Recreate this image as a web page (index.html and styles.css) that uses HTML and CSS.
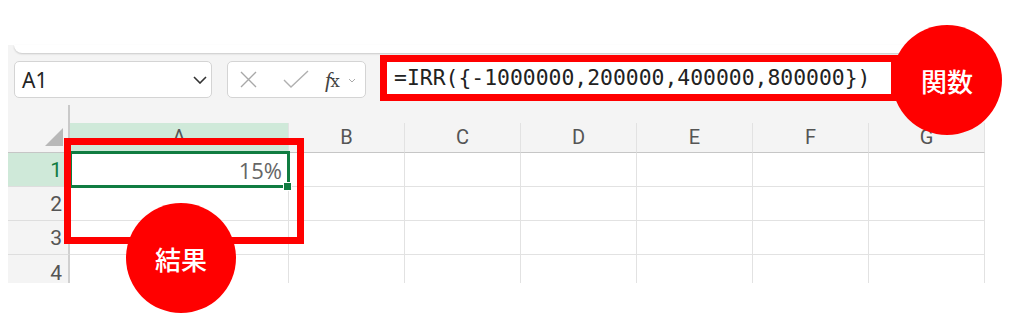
FILE: index.html
```html
<!DOCTYPE html>
<html lang="ja">
<head>
<meta charset="utf-8">
<title>IRR</title>
<link rel="stylesheet" href="styles.css">
</head>
<body>
<div class="page">
  <div class="app">
    <div class="ribbon-edge"></div>
    <div class="formula-row">
      <div class="name-box">
        <span class="name-text">A1</span>
        <svg class="name-chev" width="14" height="8" viewBox="0 0 14 8"><path d="M1 1 L7 7 L13 1" fill="none" stroke="#333" stroke-width="1.6"/></svg>
      </div>
      <div class="fn-box">
        <svg class="ic-x" width="17" height="17" viewBox="0 0 17 17"><path d="M1 1 L16 16 M16 1 L1 16" fill="none" stroke="#a8a8a8" stroke-width="1.4"/></svg>
        <svg class="ic-check" width="26" height="19" viewBox="0 0 26 19"><path d="M1 10 L8 17 L25 1" fill="none" stroke="#b0b0b0" stroke-width="1.4"/></svg>
        <span class="fx"><i>f</i><i class="x">x</i></span>
        <svg class="ic-chev" width="8" height="5" viewBox="0 0 8 5"><path d="M1 1 L4 4 L7 1" fill="none" stroke="#aaa" stroke-width="1"/></svg>
      </div>
      <div class="formula">=IRR({-1000000,200000,400000,800000})</div>
    </div>
    <div class="sheet">
      <div class="corner"><span class="tri"></span></div>
      <div class="ch sel">A</div>
      <div class="ch">B</div>
      <div class="ch">C</div>
      <div class="ch">D</div>
      <div class="ch">E</div>
      <div class="ch">F</div>
      <div class="ch">G</div>

      <div class="rh sel">1</div>
      <div class="c active">15%</div>
      <div class="c"></div><div class="c"></div><div class="c"></div><div class="c"></div><div class="c"></div><div class="c"></div>

      <div class="rh">2</div>
      <div class="c"></div><div class="c"></div><div class="c"></div><div class="c"></div><div class="c"></div><div class="c"></div><div class="c"></div>

      <div class="rh">3</div>
      <div class="c"></div><div class="c"></div><div class="c"></div><div class="c"></div><div class="c"></div><div class="c"></div><div class="c"></div>

      <div class="rh last">4</div>
      <div class="c last"></div><div class="c last"></div><div class="c last"></div><div class="c last"></div><div class="c last"></div><div class="c last"></div><div class="c last"></div>
    </div>
  </div>

  <div class="mark-box result-box"></div>
  <div class="badge badge-fn">関数</div>
  <div class="badge badge-result">結果</div>
</div>
</body>
</html>
```

FILE: styles.css
```css
* { box-sizing: border-box; }
html, body { margin: 0; padding: 0; background: #fff; }
.page {
  position: relative;
  width: 1024px;
  height: 320px;
  overflow: hidden;
  font-family: "Noto Sans", "Liberation Sans", sans-serif;
}
.app {
  margin: 45px 0 0 8px;
  width: 977px;
  height: 238px;
  background: #f4f4f4;
}
.ribbon-edge {
  margin-left: 6px;
  width: 960px;
  height: 8px;
  background: #fff;
  border-radius: 0 0 10px 10px;
  box-shadow: 0 1px 2px rgba(0,0,0,0.18);
}
.formula-row {
  display: flex;
  align-items: flex-start;
  height: 37px;
  margin-top: 8px;
}
.name-box {
  margin-left: 6px;
  width: 198px;
  height: 37px;
  background: #fff;
  border: 1px solid #d4d4d4;
  border-radius: 5px;
  display: flex;
  align-items: center;
  justify-content: space-between;
  padding: 0 3px 0 7px;
}
.name-text {
  font-size: 21px;
  color: #242424;
  font-family: "Noto Sans", "Open Sans", sans-serif;
}
.name-chev { margin-right: 1px; margin-top: 1px; }
.fn-box {
  margin-left: 15px;
  width: 139px;
  height: 37px;
  background: #fff;
  border: 1px solid #d4d4d4;
  border-radius: 5px;
  display: flex;
  align-items: center;
  padding-left: 12px;
}
.ic-x { margin-right: 26px; }
.ic-check { margin-right: 16px; }
.fx {
  font-family: "Liberation Serif", serif;
  font-size: 22px;
  color: #444;
  margin-right: 9px;
  line-height: 1;
}
.fx i { font-style: italic; letter-spacing: -1px; }
.fx .x { font-family: "DejaVu Serif", serif; font-size: 17px; font-style: normal; }
.ic-chev { margin-top: 2px; }
.formula {
  margin-left: 14px;
  margin-top: -6px;
  width: 518px;
  height: 46px;
  border: 7px solid #f00;
  background: #fff;
  padding-left: 7px;
  font-family: "DejaVu Sans Mono", "Liberation Mono", monospace;
  font-size: 21.4px;
  line-height: 32px;
  color: #222;
  white-space: nowrap;
}
.sheet {
  margin-top: 7px;
  display: grid;
  grid-template-columns: 62px 219px repeat(6, 116px);
  grid-template-rows: 48px 34px 34px 34px 28px;
}
.corner {
  position: relative;
  border-right: 2px solid #c9c9c9;
  border-bottom: 1px solid #c6c6c6;
}
.tri {
  position: absolute;
  right: 5px;
  bottom: 6px;
  width: 0;
  height: 0;
  border-left: 18px solid transparent;
  border-bottom: 18px solid #b8b8b8;
}
.ch {
  margin-top: 18px;
  border-right: 1px solid #e2e2e2;
  border-bottom: 1px solid #c6c6c6;
  text-align: center;
  font-family: "Roboto", "Liberation Sans", sans-serif;
  font-size: 20px;
  line-height: 29px;
  color: #555;
}
.ch.sel { background: #cfe9d9; color: #555; }
.rh {
  border-right: 2px solid #d0d0d0;
  border-bottom: 1px solid #dedede;
  text-align: right;
  padding-right: 6px;
  font-family: "Roboto", "Liberation Sans", sans-serif;
  font-size: 21px;
  line-height: 34px;
  color: #555;
}
.rh.sel { background: #cfe9d9; color: #107c41; }
.rh.last { border-bottom: none; line-height: 36px; }
.c {
  background: #fff;
  border-right: 1px solid #e2e2e2;
  border-bottom: 1px solid #e2e2e2;
}
.c.last { border-bottom: none; }
.c.active {
  position: relative;
  text-align: right;
  padding-right: 6px;
  font-family: "Open Sans", "Liberation Sans", sans-serif;
  font-weight: 400;
  font-size: 22px;
  line-height: 34px;
  color: #666;
}
.c.active::after {
  content: "";
  position: absolute;
  left: -1px;
  top: -2px;
  right: -2px;
  bottom: -2px;
  border: 3px solid #107c41;
}
.c.active::before {
  content: "";
  position: absolute;
  right: -4px;
  bottom: -5px;
  width: 7px;
  height: 7px;
  background: #107c41;
  border: 1px solid #fff;
  z-index: 1;
}
.mark-box {
  position: absolute;
  border: 7px solid #f00;
}
.result-box {
  left: 64px;
  top: 138px;
  width: 240px;
  height: 106px;
}
.badge {
  position: absolute;
  width: 110px;
  height: 110px;
  border-radius: 50%;
  background: #f00;
  color: #fff;
  display: flex;
  align-items: center;
  justify-content: center;
  font-family: "Noto Sans CJK JP", sans-serif;
  font-weight: 500;
  font-size: 26px;
}
.badge-fn { left: 892px; top: 25px; }
.badge-result { left: 126px; top: 203px; }
```
